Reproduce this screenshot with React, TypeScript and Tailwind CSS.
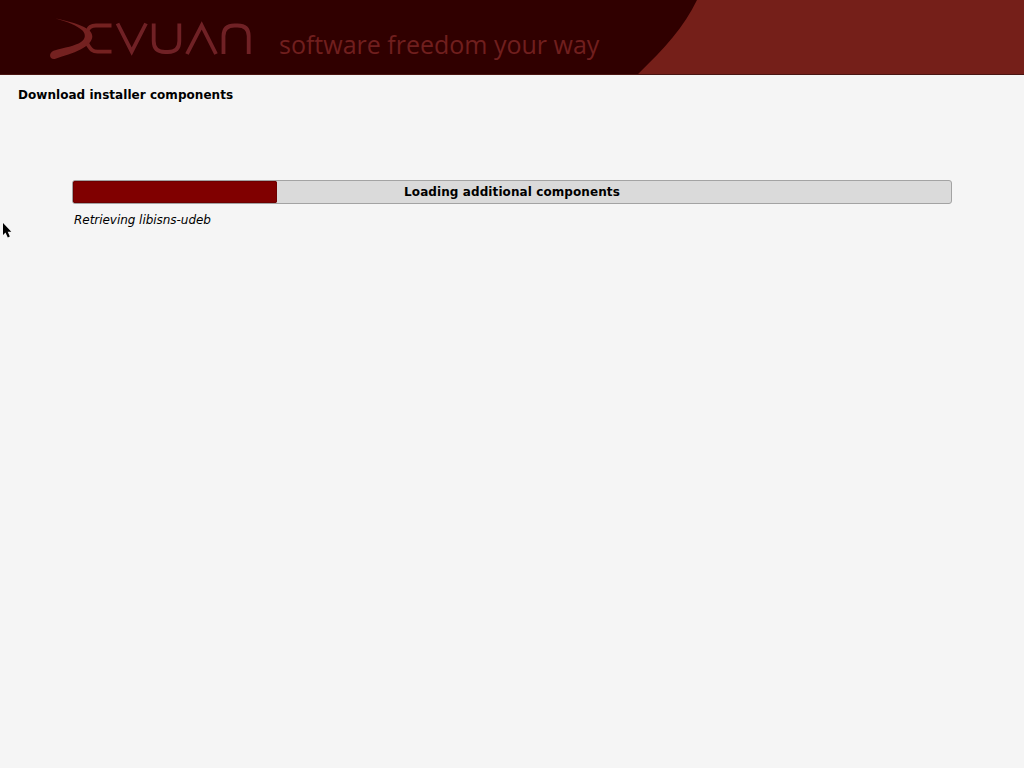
import React from 'react';

const PROGRESS = 204;

const Logo: React.FC = () => (
  <svg className="block w-[216px] h-[48px]" viewBox="44 14 216 48" fill="none" aria-label="Devuan">
    <path
      d="M55.500 18.500C66 20.500 77 23.500 84 27C90 30 92.300 33 92.300 36.500C92.300 41 88 45.500 80.500 49.500C73 53.500 64 55.500 55.500 58.700C49.500 60.500 48 53 53.500 50.700C65 47.500 75 46 81 42C85.500 39 86 34.500 82.500 30.500C77 25.500 67 21.500 55.500 18.500Z"
      fill="#742120"
    />
    <path d="M111.500 25.500H96C91 25.500 88.500 27.500 87.500 31M111.500 51.700H97.500C91 51.700 90 47.500 87 43.500" stroke="#742120" strokeWidth="3.800" />
    <g stroke="#702125" strokeWidth="3.800">
      <path d="M117.500 23.500L131.700 51.500L146 23.500" />
      <path d="M153.700 23.500V41Q153.700 52 165 52H168Q179.300 52 179.300 41V23.500" />
      <path d="M187 54L201.700 25.500L216 54" />
      <path d="M223.500 54V36Q223.500 25.500 234.500 25.500H237.500Q248.700 25.500 248.700 36V54" />
    </g>
  </svg>
);

const Header: React.FC = () => (
  <header className="relative h-[75px] bg-[#300000] border-b border-[#4a1512] overflow-hidden">
    <svg className="absolute inset-0 w-full h-[75px]" viewBox="0 0 1024 75">
      <path d="M697 0C684 27 664 49 637 75H1024V0Z" fill="#751f19" />
    </svg>
    <div className="relative flex pl-[44px] pt-[14px]">
      <Logo />
      <span className="ml-[19px] mt-[12px] text-[25px] leading-[37px] text-[#701f1e] whitespace-nowrap font-['Open_Sans',sans-serif]">
        software freedom your way
      </span>
    </div>
  </header>
);

const App: React.FC = () => {
  return (
    <div className="relative w-[1024px] h-[768px] bg-[#f5f5f5] text-black overflow-hidden font-['DejaVu_Sans',sans-serif] text-[12px] leading-4">
      <Header />
      <h1 className="pl-[18px] pt-[12px] font-bold tracking-[0.04px]">Download installer components</h1>

      <main className="px-[72px] pt-[77px]">
        {/* Progress bar */}
        <div className="grid h-6 bg-[#dadada] border border-[#a3a3a3] rounded-[3px]">
          <div
            className="col-start-1 row-start-1 h-[22px] bg-[#800000] outline outline-[#6e0000] -outline-offset-1 rounded-[2px]"
            style={{ width: PROGRESS }}
          />
          <div className="col-start-1 row-start-1 text-center font-bold leading-[22px] tracking-[0.09px]">Loading additional components</div>
        </div>
        <p className="pl-[2px] mt-[8px] italic tracking-[-0.04px]">Retrieving libisns-udeb</p>
      </main>

      {/* Mouse pointer */}
      <svg className="absolute left-[2px] top-[222px] w-[10px] h-[17px]" viewBox="0 0 10 17">
        <path d="M1 1V13L3.500 10.500L5.800 15.500L7.800 14.500L5.700 9.700H9.300Z" fill="#000" />
      </svg>
    </div>
  );
};

export default App;
